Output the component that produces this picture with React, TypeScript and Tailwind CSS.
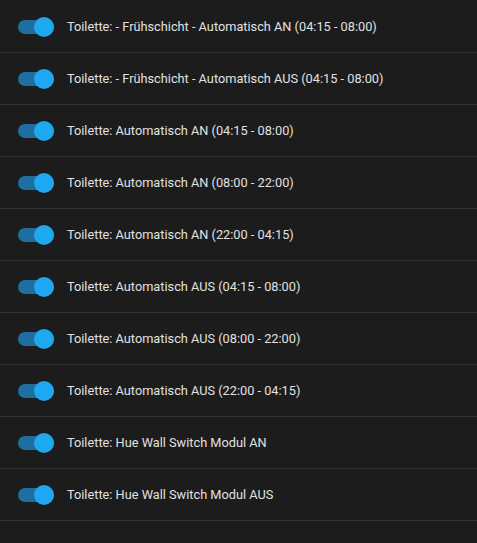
import React from 'react';

const rows = [
  'Toilette: - Frühschicht - Automatisch AN (04:15 - 08:00)',
  'Toilette: - Frühschicht - Automatisch AUS (04:15 - 08:00)',
  'Toilette: Automatisch AN (04:15 - 08:00)',
  'Toilette: Automatisch AN (08:00 - 22:00)',
  'Toilette: Automatisch AN (22:00 - 04:15)',
  'Toilette: Automatisch AUS (04:15 - 08:00)',
  'Toilette: Automatisch AUS (08:00 - 22:00)',
  'Toilette: Automatisch AUS (22:00 - 04:15)',
  'Toilette: Hue Wall Switch Modul AN',
  'Toilette: Hue Wall Switch Modul AUS',
];

const Toggle: React.FC = () => (
  <div className="relative w-[36px] h-[20px] shrink-0 flex items-center">
    <div className="w-[36px] h-[14px] rounded-full bg-[#1d6fa0]" />
    <div className="absolute right-0 top-0 w-[20px] h-[20px] rounded-full bg-[#1ea8f0]" />
  </div>
);

export default function App() {
  return (
    <div className="w-[477px] h-[543px] bg-[#1c1c1c] pt-[1px] font-['Roboto',sans-serif]">
      {rows.map((label) => (
        <div key={label} className="flex items-center h-[52px] pl-[18px] border-b border-[#333333]">
          <Toggle />
          <span className="ml-[13px] text-[12.75px] text-[#e1e1e1]">{label}</span>
        </div>
      ))}
    </div>
  );
}
